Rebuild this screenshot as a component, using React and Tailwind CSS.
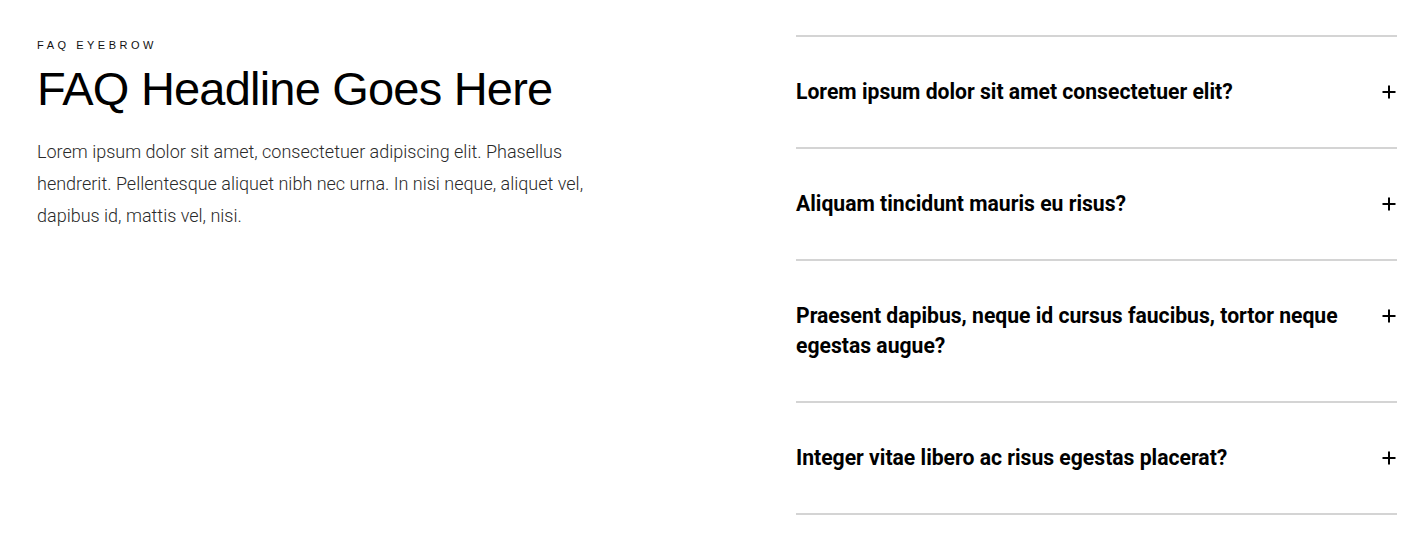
import React from "react";

const questions = [
  "Lorem ipsum dolor sit amet consectetuer elit?",
  "Aliquam tincidunt mauris eu risus?",
  "Praesent dapibus, neque id cursus faucibus, tortor neque egestas augue?",
  "Integer vitae libero ac risus egestas placerat?",
];

function Plus() {
  return (
    <svg width="16" height="16" viewBox="0 0 16 16" className="shrink-0 mt-[7px]">
      <path d="M8 1.5v13M1.5 8h13" stroke="#000" strokeWidth="2" />
    </svg>
  );
}

export default function App() {
  return (
    <div className="bg-white w-full min-h-[541px] flex justify-between pl-[37px] pr-[25px] pt-[35px]" style={{ fontFamily: "Roboto, sans-serif" }}>
      <div className="w-[560px] pt-[3px]">
        <div className="text-[11px] tracking-[0.32em] text-[#111] leading-[14px]" style={{ fontFamily: "'Liberation Sans', Arial, sans-serif" }}>
          FAQ EYEBROW
        </div>
        <h1 className="text-[47px] tracking-[-0.8px] leading-[56px] text-black mt-[9px]" style={{ fontFamily: "'Liberation Sans', Arial, sans-serif" }}>
          FAQ Headline Goes Here
        </h1>
        <p className="mt-[19px] text-[18px] leading-[32px] font-light text-[#2a2a2a]">
          Lorem ipsum dolor sit amet, consectetuer adipiscing elit. Phasellus hendrerit. Pellentesque aliquet nibh nec urna. In nisi neque, aliquet vel, dapibus id, mattis vel, nisi.
        </p>
      </div>
      <div className="w-[601px] border-t-2 border-[#d4d4d4]">
        {questions.map((q) => (
          <div key={q} className="flex justify-between gap-6 py-[40px] border-b-2 border-[#d4d4d4]">
            <div className="text-[21.15px] leading-[30px] font-bold text-black max-w-[560px]">{q}</div>
            <Plus />
          </div>
        ))}
      </div>
    </div>
  );
}
